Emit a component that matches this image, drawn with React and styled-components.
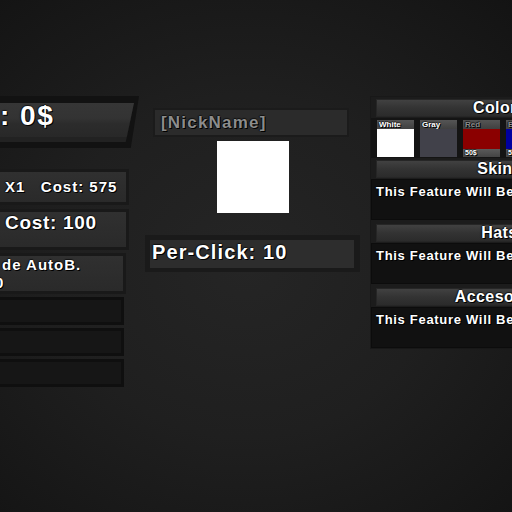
import React from 'react';
import styled, { createGlobalStyle, css } from 'styled-components';

const GlobalStyle = createGlobalStyle`
    html, body {
        margin: 0;
        padding: 0;
        width: 512px;
        height: 512px;
        overflow: hidden;
    }
    body {
        background: radial-gradient(ellipse 420px 380px at 48% 52%, #252525 0%, #1f1f1f 45%, #181818 75%, #121212 100%);
        font-family: "Liberation Sans", Arial, sans-serif;
        font-weight: bold;
        color: #fff;
    }
`;

const stroke = css`
    text-shadow: 1px 1px 0 #000, -1px 0 1px rgba(0, 0, 0, 0.6), 0 -1px 1px rgba(0, 0, 0, 0.6);
`;

const Screen = styled.div`
    display: flex;
    align-items: flex-start;
    width: 512px;
    height: 512px;
`;

/* ---------- left column ---------- */

const LeftCol = styled.div`
    flex: 0 0 143px;
    display: flex;
    flex-direction: column;
    padding-top: 96px;
`;

const MoneyBar = styled.div`
    position: relative;
    height: 52px;
    width: 143px;
    margin-bottom: 21px;
    display: flex;
    align-items: flex-start;

    &::before {
        content: '';
        position: absolute;
        left: -20px;
        right: 4px;
        top: 0;
        bottom: 0;
        background: #121212;
        transform: skewX(-9deg);
        transform-origin: top left;
    }

    &::after {
        content: '';
        position: absolute;
        left: -20px;
        right: 9px;
        top: 7px;
        height: 34px;
        background: linear-gradient(#363636 0%, #333 45%, #2c2c2c 60%, #282828 100%);
        box-shadow: 0 5px 0 #222;
        transform: skewX(-12deg);
        transform-origin: top left;
    }
`;

const MoneyText = styled.span`
    position: relative;
    z-index: 1;
    margin-top: 5px;
    font-size: 28px;
    line-height: 30px;
    letter-spacing: 1.5px;
    white-space: pre;
    ${stroke};
`;

const Panel = styled.div`
    width: 121px;
    border: 3px solid #191919;
    border-left: none;
    background: linear-gradient(#303030, #2a2a2a);
    margin-bottom: ${p => p.mb || 3}px;
    display: flex;
    flex-direction: column;
    justify-content: ${p => (p.top ? 'flex-start' : 'center')};
    height: ${p => p.h}px;
    padding-left: ${p => p.pad || 0}px;
    box-sizing: content-box;
    overflow: hidden;
`;

const PanelText = styled.div`
    font-size: ${p => p.size}px;
    line-height: ${p => p.lh || p.size + 3}px;
    letter-spacing: ${p => p.ls || 0}px;
    white-space: pre;
    margin-left: ${p => p.shift || 0}px;
    ${stroke};
`;

const DarkRow = styled.div`
    width: 121px;
    height: 22px;
    border: 3px solid #0f0f0f;
    border-left: none;
    background: #161616;
    margin-bottom: 3px;
`;

/* ---------- middle column ---------- */

const MidCol = styled.div`
    flex: 0 0 213px;
    margin-left: 2px;
    padding-top: 108px;
    display: flex;
    flex-direction: column;
    align-items: flex-start;
`;

const NickBox = styled.div`
    margin-left: 8px;
    width: 186px;
    height: 25px;
    border: 2px solid #1b1b1b;
    background: #2b2b2b;
    display: flex;
    align-items: center;
    padding-left: 6px;
`;

const NickText = styled.span`
    font-size: 17px;
    letter-spacing: 1.2px;
    color: #8c8c8c;
    ${stroke};
`;

const Avatar = styled.div`
    width: 72px;
    height: 72px;
    margin: 4px 0 0 72px;
    background: #fff;
`;

const StatBox = styled.div`
    margin-top: 22px;
    width: 202px;
    height: 28px;
    border: 5px solid #1a1a1a;
    border-width: 5px 6px 4px 5px;
    background: #2d2d2d;
    display: flex;
    align-items: center;
    padding-left: 2px;
`;

const StatText = styled.span`
    font-size: 20px;
    letter-spacing: 1.1px;
    margin-top: -4px;
    ${stroke};
`;

/* ---------- right column ---------- */

const RightCol = styled.div`
    flex: 0 0 254px;
    margin-left: 10px;
    padding-top: 96px;
    display: flex;
    flex-direction: column;
`;

const Section = styled.div`
    display: flex;
    flex-direction: column;
    background: #1c1c1c;
    border: 1px solid #181818;
`;

const Header = styled.div`
    margin: 2px 0 0 5px;
    height: 16px;
    background: linear-gradient(#414141, #333 50%, #2b2b2b);
    border: 1px solid #262626;
    display: flex;
    align-items: center;
    justify-content: center;
    font-size: 16px;
    letter-spacing: 0.4px;
    ${stroke};
`;

const Swatches = styled.div`
    display: flex;
    gap: 6px;
    padding: 2px 0 1px 6px;
    background: #141414;
    margin-top: 1px;
`;

const Swatch = styled.div`
    width: 37px;
    display: flex;
    flex-direction: column;
`;

const SwatchLabel = styled.div`
    height: 9px;
    background: linear-gradient(#555, #404040);
    font-size: 8px;
    line-height: 9px;
    padding-left: 2px;
    color: ${p => p.dim ? '#8a8a8a' : '#fff'};
    ${stroke};
`;

const SwatchColor = styled.div`
    height: ${p => p.h}px;
    background: ${p => p.c};
`;

const Price = styled.div`
    height: 8px;
    background: linear-gradient(#5a5a5a, #444);
    font-size: 7px;
    line-height: 8px;
    padding-left: 2px;
    ${stroke};
`;

const InfoBox = styled.div`
    height: 35px;
    margin-top: 1px;
    background: #111;
    border: 1px solid #0c0c0c;
    padding: 4px 0 0 4px;
    font-size: 13px;
    letter-spacing: 0.7px;
    white-space: nowrap;
    ${stroke};
`;

const Gap = styled.div`
    height: 2px;
`;

const colors = [
    { name: 'White', c: '#ffffff' },
    { name: 'Gray', c: '#41414a' },
    { name: 'Red', c: '#8b0000', price: '50$' },
    { name: 'Blue', c: '#0000a0', price: '50$' },
];

const extras = ['Skins', 'Hats', 'Accesories'];

export default function App() {
    return <>
        <GlobalStyle/>
        <Screen>
            <LeftCol>
                <MoneyBar>
                    <MoneyText>{': 0$'}</MoneyText>
                </MoneyBar>
                <Panel h={30} pad={5} mb={4}>
                    <PanelText size={15} ls={1}>{'X1   Cost: 575'}</PanelText>
                </Panel>
                <Panel h={35} pad={5} top>
                    <PanelText size={19} lh={22} ls={0.7}>Cost: 100</PanelText>
                </Panel>
                <Panel h={35} pad={2}>
                    <PanelText size={15} lh={18} ls={1}>de AutoB.</PanelText>
                    <PanelText size={15} lh={18} shift={-7}>0</PanelText>
                </Panel>
                <DarkRow/>
                <DarkRow/>
                <DarkRow/>
            </LeftCol>

            <MidCol>
                <NickBox><NickText>[NickName]</NickText></NickBox>
                <Avatar/>
                <StatBox><StatText>Per-Click: 10</StatText></StatBox>
            </MidCol>

            <RightCol>
                <Section>
                    <Header>Colors</Header>
                    <Swatches>
                        {colors.map(col => <Swatch key={col.name}>
                            <SwatchLabel dim={!!col.price}>{col.name}</SwatchLabel>
                            <SwatchColor c={col.c} h={col.price ? 20 : 28}/>
                            {col.price && <Price>{col.price}</Price>}
                        </Swatch>)}
                    </Swatches>
                    {extras.map((name, i) => <React.Fragment key={name}>
                        {i > 0 && <Gap/>}
                        <Header>{name}</Header>
                        <InfoBox>This Feature Will Be Added Soon!</InfoBox>
                    </React.Fragment>)}
                </Section>
            </RightCol>
        </Screen>
    </>;
}
